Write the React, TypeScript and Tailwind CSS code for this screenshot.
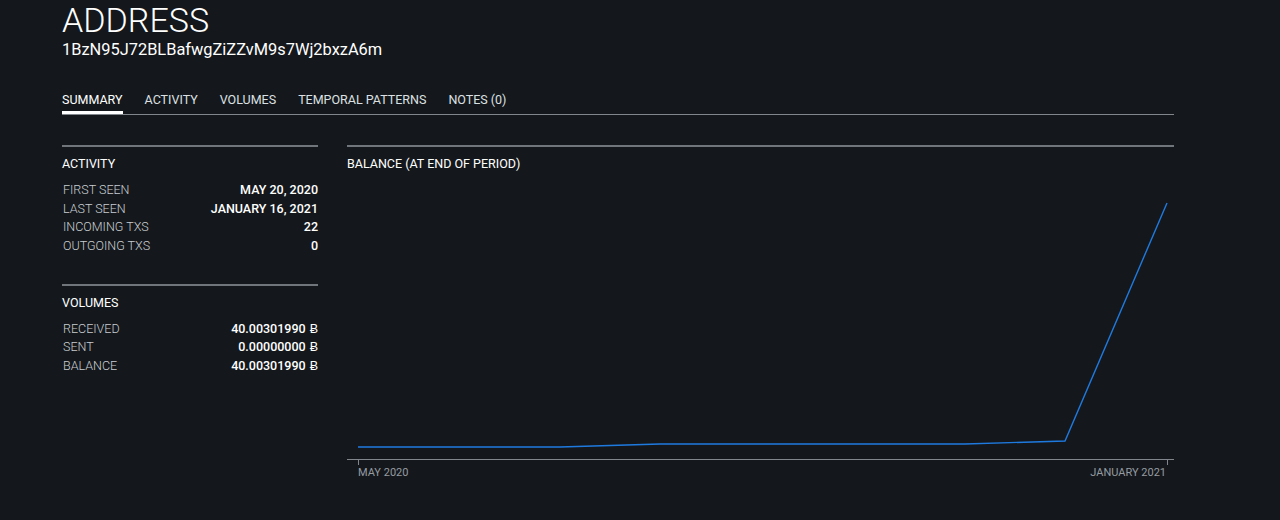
import React from "react";

interface Row {
  label: string;
  value: string;
  btc?: boolean;
}

const activityRows: Row[] = [
  { label: "FIRST SEEN", value: "MAY 20, 2020" },
  { label: "LAST SEEN", value: "JANUARY 16, 2021" },
  { label: "INCOMING TXS", value: "22" },
  { label: "OUTGOING TXS", value: "0" },
];

const volumeRows: Row[] = [
  { label: "RECEIVED", value: "40.00301990", btc: true },
  { label: "SENT", value: "0.00000000", btc: true },
  { label: "BALANCE", value: "40.00301990", btc: true },
];

const tabs = ["SUMMARY", "ACTIVITY", "VOLUMES", "TEMPORAL PATTERNS", "NOTES (0)"];

// balance points, already in chart pixels
const points: [number, number][] = [
  [11, 267],
  [213, 267],
  [313, 264],
  [618, 264],
  [718, 261],
  [820, 23],
];

const Section = ({ title, rows }: { title: string; rows: Row[] }) => (
  <div className="flex flex-col">
    <div className="h-[2px] bg-[#6f757a]" />
    <div className="mt-[10px] text-[12.5px] leading-[14px] font-normal text-white">{title}</div>
    <div className="mt-[10px] flex flex-col">
      {rows.map((row, i) => (
        <div key={i} className="flex justify-between items-center h-[18.7px] text-[12.5px]">
          <span className="font-light text-[#c9cdd1] pl-[1px]">{row.label}</span>
          <span className="font-medium text-white">
            {row.value}
            {row.btc && <span className="ml-[4px]">Ƀ</span>}
          </span>
        </div>
      ))}
    </div>
  </div>
);

const BalanceChart = () => {
  const d = points.map((p, i) => `${i === 0 ? "M" : "L"}${p[0]} ${p[1]}`).join(" ");
  return (
    <svg width="827" height="305" viewBox="0 0 827 305" className="block">
      <path d={d} fill="none" stroke="#1f7ae0" strokeWidth="1.4" />
      <line x1="0" y1="279.5" x2="827" y2="279.5" stroke="#80868b" strokeWidth="1" />
      <line x1="11.5" y1="279" x2="11.5" y2="285" stroke="#80868b" strokeWidth="1" />
      <line x1="820.5" y1="279" x2="820.5" y2="285" stroke="#80868b" strokeWidth="1" />
      <text x="11" y="296" fontSize="11" fill="#959ba1" fontFamily="Roboto, sans-serif">
        MAY 2020
      </text>
      <text x="819" y="296" fontSize="11" fill="#959ba1" textAnchor="end" fontFamily="Roboto, sans-serif">
        JANUARY 2021
      </text>
    </svg>
  );
};

export default function App() {
  return (
    <div
      className="w-[1280px] h-[520px] bg-[#14181c] text-white overflow-hidden"
      style={{ fontFamily: "Roboto, 'Liberation Sans', sans-serif" }}
    >
      <div className="ml-[62px] w-[1112px] flex flex-col">
        <div className="text-[34px] leading-[40px] font-light">ADDRESS</div>
        <div className="text-[16.4px] leading-[20px] font-normal">
          1BzN95J72BLBafwgZiZZvM9s7Wj2bxzA6m
        </div>

        <div className="mt-[32px] flex border-b border-[#80868b]">
          {tabs.map((t, i) => (
            <div key={i} className="mr-[22px] flex flex-col">
              <div
                className={`text-[12.5px] leading-[15px] font-normal ${
                  i === 0 ? "text-white" : "text-[#dde0e3]"
                }`}
              >
                {t}
              </div>
              <div className={`mt-[4px] h-[3px] ${i === 0 ? "bg-white" : "bg-transparent"}`} />
            </div>
          ))}
        </div>

        <div className="mt-[30px] flex gap-[29px]">
          <div className="w-[256px] flex flex-col gap-[28px]">
            <Section title="ACTIVITY" rows={activityRows} />
            <Section title="VOLUMES" rows={volumeRows} />
          </div>
          <div className="flex-1 flex flex-col">
            <div className="h-[2px] bg-[#6f757a]" />
            <div className="mt-[10px] text-[12.5px] leading-[14px] font-normal text-white">
              BALANCE (AT END OF PERIOD)
            </div>
            <div className="mt-[9px]">
              <BalanceChart />
            </div>
          </div>
        </div>
      </div>
    </div>
  );
}
